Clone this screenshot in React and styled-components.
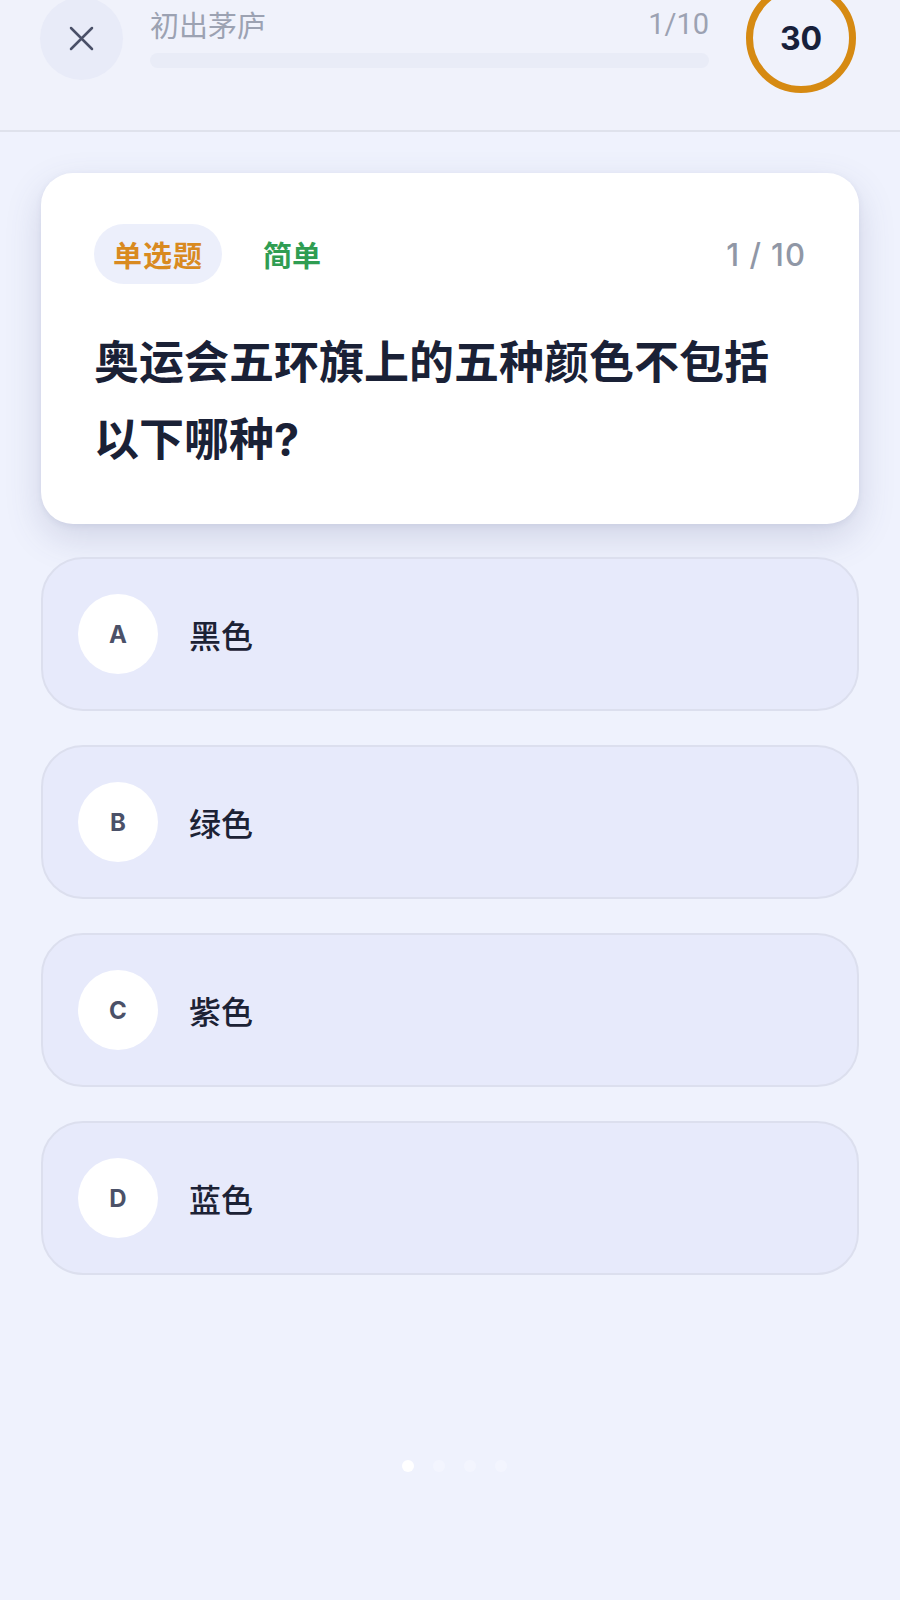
import React from "react";
import styled, { createGlobalStyle } from "styled-components";

const GlobalStyle = createGlobalStyle`
  html, body {
    margin: 0;
    padding: 0;
    background: #eff2fd;
    font-family: Inter, "Noto Sans CJK SC", sans-serif;
  }
  * { box-sizing: border-box; }
`;

const Page = styled.div`
  width: 900px;
  min-height: 1600px;
  background: #eff2fd;
  overflow: hidden;
`;

const Header = styled.header`
  margin-top: -17px;
  padding: 0 44px 37px 40px;
  border-bottom: 2px solid #dfe2ec;
  display: flex;
  align-items: center;
  gap: 27px;
  background: #f0f2fb;
`;

const CloseButton = styled.button`
  width: 83px;
  height: 83px;
  border-radius: 50%;
  border: none;
  background: #e8ebf8;
  display: flex;
  align-items: center;
  justify-content: center;
  flex-shrink: 0;
  padding: 0;
`;

const HeaderMiddle = styled.div`
  flex: 1;
  display: flex;
  flex-direction: column;
  gap: 14px;
  margin-right: 10px;
`;

const HeaderTop = styled.div`
  display: flex;
  justify-content: space-between;
  align-items: center;
  height: 30px;
  color: #9ca2b2;
  font-size: 29px;
`;

const Fraction = styled.span`
  font-family: Roboto, "Noto Sans CJK SC", sans-serif;
  font-size: 29px;
`;

const Progress = styled.div`
  height: 15px;
  border-radius: 8px;
  background: #e9ecf7;
`;

const Timer = styled.div`
  width: 110px;
  height: 110px;
  border-radius: 50%;
  border: 7px solid #d68a12;
  display: flex;
  align-items: center;
  justify-content: center;
  font-size: 32px;
  font-weight: 700;
  color: #17203a;
  flex-shrink: 0;
`;

const Body = styled.main`
  padding: 41px 41px 0;
  display: flex;
  flex-direction: column;
`;

const QuestionCard = styled.section`
  background: #ffffff;
  border-radius: 32px;
  padding: 51px 53px 46px;
  box-shadow: 0 14px 36px rgba(70, 80, 130, 0.18), 0 2px 6px rgba(70, 80, 130, 0.08);
`;

const Meta = styled.div`
  display: flex;
  align-items: center;
`;

const TypeTag = styled.span`
  height: 60px;
  padding: 0 19px;
  border-radius: 30px;
  background: #eceffb;
  color: #d98a1f;
  font-size: 29px;
  font-weight: 600;
  letter-spacing: 1px;
  display: flex;
  align-items: center;
`;

const Level = styled.span`
  margin-left: 41px;
  color: #2f9d52;
  font-size: 29px;
  font-weight: 600;
`;

const Count = styled.span`
  margin-left: auto;
  color: #9097a6;
  font-size: 31px;
  font-weight: 500;
  letter-spacing: 1px;
`;

const Question = styled.h1`
  margin: 40px 0 0;
  max-width: 700px;
  font-size: 45px;
  line-height: 77px;
  font-weight: 700;
  color: #1a2136;
`;

const Options = styled.div`
  margin-top: 33px;
  display: flex;
  flex-direction: column;
  gap: 34px;
`;

const Option = styled.button`
  height: 154px;
  border-radius: 42px;
  border: 2px solid #dcdfee;
  background: #e7eafb;
  padding: 0 0 0 35px;
  display: flex;
  align-items: center;
  gap: 31px;
  font-family: inherit;
  cursor: pointer;
  text-align: left;
`;

const Letter = styled.span`
  width: 80px;
  height: 80px;
  border-radius: 50%;
  background: #ffffff;
  display: flex;
  align-items: center;
  justify-content: center;
  color: #4b5168;
  font-size: 24px;
  font-weight: 700;
  flex-shrink: 0;
`;

const OptionText = styled.span`
  font-size: 32px;
  font-weight: 500;
  color: #1c2235;
`;

const Dots = styled.div`
  margin-top: 185px;
  display: flex;
  justify-content: center;
  gap: 19px;
  padding-left: 8px;
`;

const Dot = styled.span`
  width: 12px;
  height: 12px;
  border-radius: 50%;
  background: ${(p) => (p.$active ? "#ffffff" : "#f3f5fe")};
`;

const options = [
  { key: "A", text: "黑色" },
  { key: "B", text: "绿色" },
  { key: "C", text: "紫色" },
  { key: "D", text: "蓝色" },
];

export default function App() {
  return (
    <Page>
      <GlobalStyle />
      <Header>
        <CloseButton aria-label="close">
          <svg width="25" height="25" viewBox="0 0 25 25" fill="none">
            <path
              d="M2 2L23 23M23 2L2 23"
              stroke="#4a5068"
              strokeWidth="2.5"
              strokeLinecap="round"
            />
          </svg>
        </CloseButton>
        <HeaderMiddle>
          <HeaderTop>
            <span>初出茅庐</span>
            <Fraction>1/10</Fraction>
          </HeaderTop>
          <Progress />
        </HeaderMiddle>
        <Timer>30</Timer>
      </Header>
      <Body>
        <QuestionCard>
          <Meta>
            <TypeTag>单选题</TypeTag>
            <Level>简单</Level>
            <Count>1 / 10</Count>
          </Meta>
          <Question>奥运会五环旗上的五种颜色不包括以下哪种?</Question>
        </QuestionCard>
        <Options>
          {options.map((o) => (
            <Option key={o.key}>
              <Letter>{o.key}</Letter>
              <OptionText>{o.text}</OptionText>
            </Option>
          ))}
        </Options>
        <Dots>
          <Dot $active />
          <Dot />
          <Dot />
          <Dot />
        </Dots>
      </Body>
    </Page>
  );
}
